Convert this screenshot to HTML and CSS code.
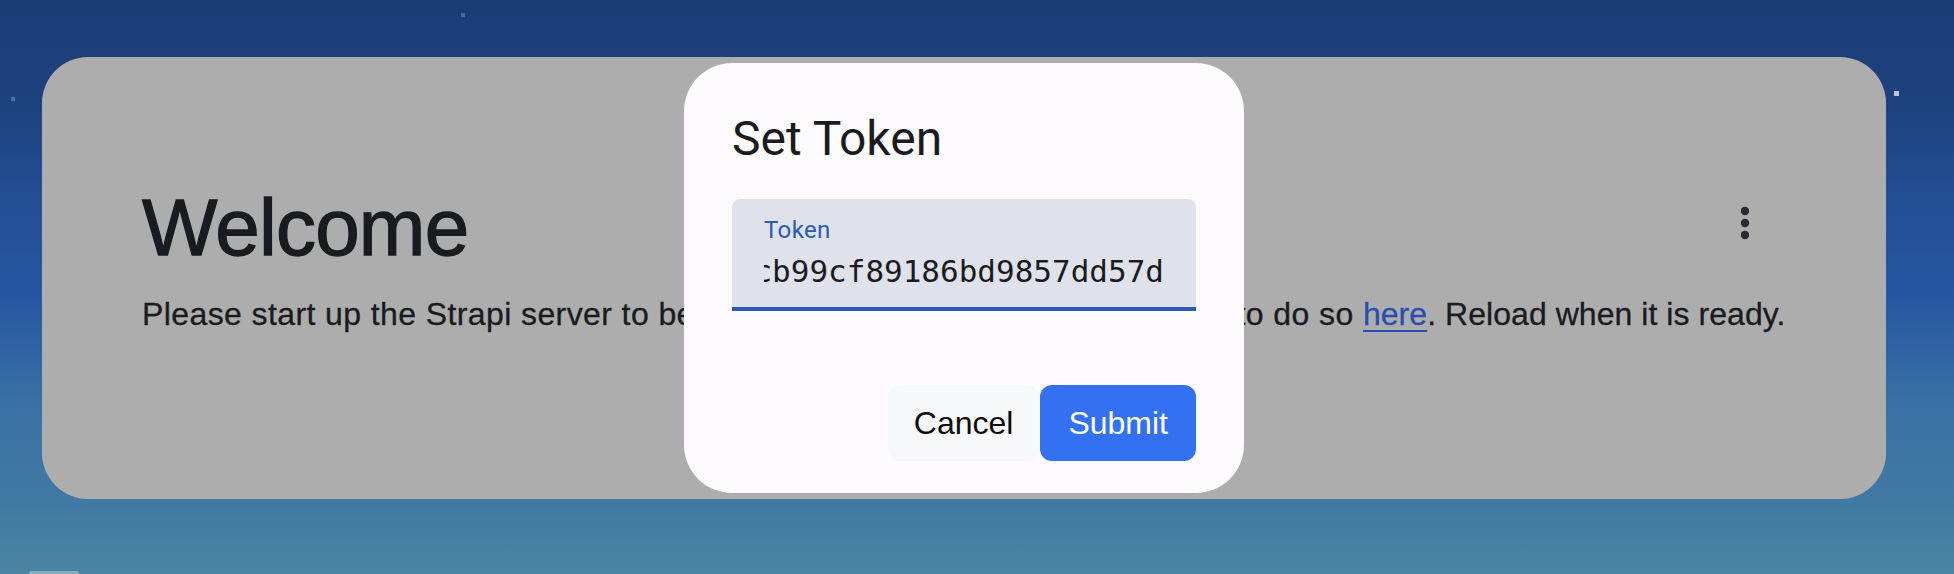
FILE: index.html
```html
<!DOCTYPE html>
<html lang="en">
<head>
<meta charset="utf-8">
<title>Welcome</title>
<link rel="stylesheet" href="styles.css">
</head>
<body>
<div class="sky">
  <span class="star star-a"></span>
  <span class="star star-b"></span>
  <span class="star star-c"></span>
  <span class="peek"></span>

  <main class="card">
    <div class="card-head">
      <h1 class="title">Welcome</h1>
      <button class="kebab" aria-label="More options">
        <svg width="10" height="34" viewBox="0 0 10 34" aria-hidden="true">
          <ellipse cx="5" cy="5" rx="4.2" ry="4.2" fill="#2b2b2f"/>
          <ellipse cx="5" cy="17" rx="4.2" ry="4.2" fill="#2b2b2f"/>
          <ellipse cx="5" cy="29" rx="4.2" ry="4.2" fill="#2b2b2f"/>
        </svg>
      </button>
    </div>
    <p class="lead"><span class="lead-head">Please start up the Strapi server to begin. You can find instructions on how to do so </span><span class="lead-tail"><a href="#">here</a>. Reload when it is ready.</span></p>
  </main>

  <div class="dialog" role="dialog" aria-labelledby="dlg-title">
    <h2 class="dialog-title" id="dlg-title">Set Token</h2>
    <div class="field">
      <span class="field-label">Token</span>
      <div class="field-value"><span>4f1e0a7c2d93b6e58a41cb99cf89186bd9857dd57d</span></div>
    </div>
    <div class="actions">
      <button class="btn btn-cancel">Cancel</button>
      <button class="btn btn-submit">Submit</button>
    </div>
  </div>
</div>
</body>
</html>
```
FILE: styles.css
```css
html, body {
  margin: 0;
  padding: 0;
}

body {
  width: 1954px;
  height: 574px;
  overflow: hidden;
}

.sky {
  position: relative;
  width: 1954px;
  height: 574px;
  overflow: hidden;
  padding-top: 57px;
  box-sizing: border-box;
  background: linear-gradient(180deg,
    #1b3b75 0px,
    #1e427e 100px,
    #234e94 200px,
    #2757a2 300px,
    #3a6fa4 400px,
    #4279a3 500px,
    #4a84a1 574px);
}

.star {
  position: absolute;
  width: 4px;
  height: 4px;
  background: rgba(170, 190, 220, 0.35);
}
.star-a { left: 461px; top: 13px; }
.star-b { left: 11px; top: 97px; }
.star-c { left: 1894px; top: 91px; width: 5px; height: 5px; background: rgba(215, 222, 235, 0.85); }

.peek {
  position: absolute;
  left: 29px;
  top: 571px;
  width: 50px;
  height: 6px;
  border-radius: 3px;
  background: rgba(200, 210, 220, 0.5);
}

.card {
  margin: 0 68px 0 42px;
  height: 442px;
  box-sizing: border-box;
  padding: 123px 100px 0 100px;
  background: #adadad;
  border-radius: 46px;
  font-family: "Liberation Sans", Arial, sans-serif;
  color: #1a1b1f;
}

.card-head {
  display: flex;
  justify-content: space-between;
  align-items: flex-start;
}

.title {
  margin: 0;
  font-size: 80px;
  line-height: 96px;
  font-weight: 400;
  letter-spacing: -0.8px;
  -webkit-text-stroke: 1.3px #1a1b1f;
}

.kebab {
  width: 82px;
  height: 48px;
  margin-top: 19px;
  padding: 0;
  border: 0;
  background: transparent;
  display: flex;
  align-items: center;
  justify-content: center;
}

.lead {
  margin: 14px 0 0 0;
  font-size: 32px;
  line-height: 48px;
  white-space: nowrap;
  -webkit-text-stroke: 0.3px #1a1b1f;
}

.lead-head {
  letter-spacing: 0.4px;
}

.lead-tail {
  letter-spacing: 0.05px;
}

.lead a {
  color: #2a4fb0;
  -webkit-text-stroke: 0.3px #2a4fb0;
  text-decoration: underline;
  text-underline-offset: 5px;
  text-decoration-thickness: 2px;
}

/* Dialog (overlay) */
.dialog {
  position: absolute;
  left: 684px;
  top: 63px;
  width: 560px;
  height: 430px;
  box-sizing: border-box;
  padding: 48px 48px 32px 48px;
  background: #fdfbfe;
  border-radius: 48px;
  display: flex;
  flex-direction: column;
}

.dialog-title {
  margin: 0;
  font-family: Roboto, "Noto Sans", sans-serif;
  font-weight: 400;
  font-size: 48px;
  line-height: 56px;
  color: #1b1b1f;
}

.field {
  margin-top: 32px;
  background: #dfe2ea;
  border-radius: 8px 8px 0 0;
  border-bottom: 4px solid #2a5bb5;
  padding: 15px 32px 11px 32px;
  display: flex;
  flex-direction: column;
}

.field-label {
  font-family: Roboto, "Noto Sans", sans-serif;
  font-size: 24px;
  line-height: 32px;
  color: #2a5bb5;
  letter-spacing: 0.4px;
}

.field-value {
  overflow: hidden;
  display: flex;
  justify-content: flex-end;
  font-family: "DejaVu Sans Mono", "Liberation Mono", monospace;
  font-size: 31px;
  line-height: 50px;
  letter-spacing: 0;
  color: #1b1b1f;
  white-space: nowrap;
}

.field-value span {
  flex: none;
}

.actions {
  margin-top: auto;
  display: flex;
  justify-content: flex-end;
  gap: 1px;
}

.btn {
  font-family: "Liberation Sans", Arial, sans-serif;
  font-size: 32px;
  line-height: 48px;
  padding: 14px 26px;
  border: 0;
  border-radius: 12px;
}

.btn-cancel {
  background: #f7f8fa;
  color: #0c0c0e;
}

.btn-submit {
  background: #3370f2;
  color: #ffffff;
  padding: 14px 28px;
}
```
